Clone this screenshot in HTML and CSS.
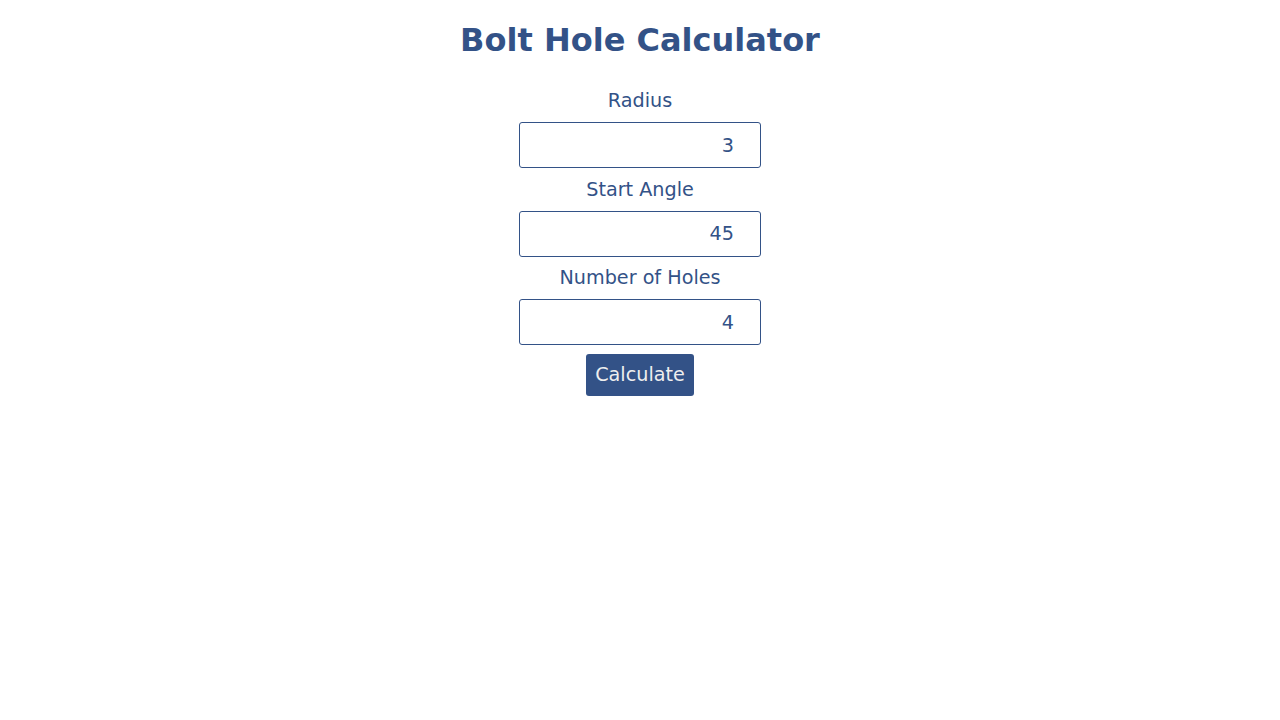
FILE: index.html
```html
<!DOCTYPE html>
<html>
<head>
<meta charset="utf-8">
<title>Bolt Hole Calculator</title>
<link rel="stylesheet" href="styles.css">
</head>
<body>
<h1 class="title">Bolt Hole Calculator</h1>
<form class="calc">
  <label class="field-label" for="radius">Radius</label>
  <input class="field-input" id="radius" type="text" value="3">
  <label class="field-label" for="angle">Start Angle</label>
  <input class="field-input" id="angle" type="text" value="45">
  <label class="field-label" for="holes">Number of Holes</label>
  <input class="field-input" id="holes" type="text" value="4">
  <button class="calc-btn" type="button">Calculate</button>
</form>
</body>
</html>
```

FILE: styles.css
```css
body {
  margin: 0 8px;
  font-family: "DejaVu Sans", sans-serif;
  color: #335287;
  background: #ffffff;
}
.title {
  font-size: 32px;
  font-weight: bold;
  text-align: center;
  margin: 21.44px 0 21.44px;
  color: #335287;
}
.calc {
  display: flex;
  flex-direction: column;
  align-items: center;
  gap: 9.25px;
  padding-top: 8.25px;
}
.field-label {
  font-size: 19.2px;
  line-height: 24px;
  color: #335287;
}
.field-input {
  box-sizing: border-box;
  width: 242px;
  height: 46px;
  border: 1px solid #335287;
  border-radius: 3px;
  padding: 0 26px 0 10px;
  font-family: "DejaVu Sans", sans-serif;
  font-size: 19.2px;
  color: #335287;
  text-align: right;
  outline: none;
}
.calc-btn {
  margin-top: -1px;
  box-sizing: border-box;
  height: 42px;
  padding: 0 9px;
  border: none;
  border-radius: 3px;
  background: #335287;
  color: #eeeeee;
  font-family: "DejaVu Sans", sans-serif;
  font-size: 19.2px;
  cursor: pointer;
}
```
